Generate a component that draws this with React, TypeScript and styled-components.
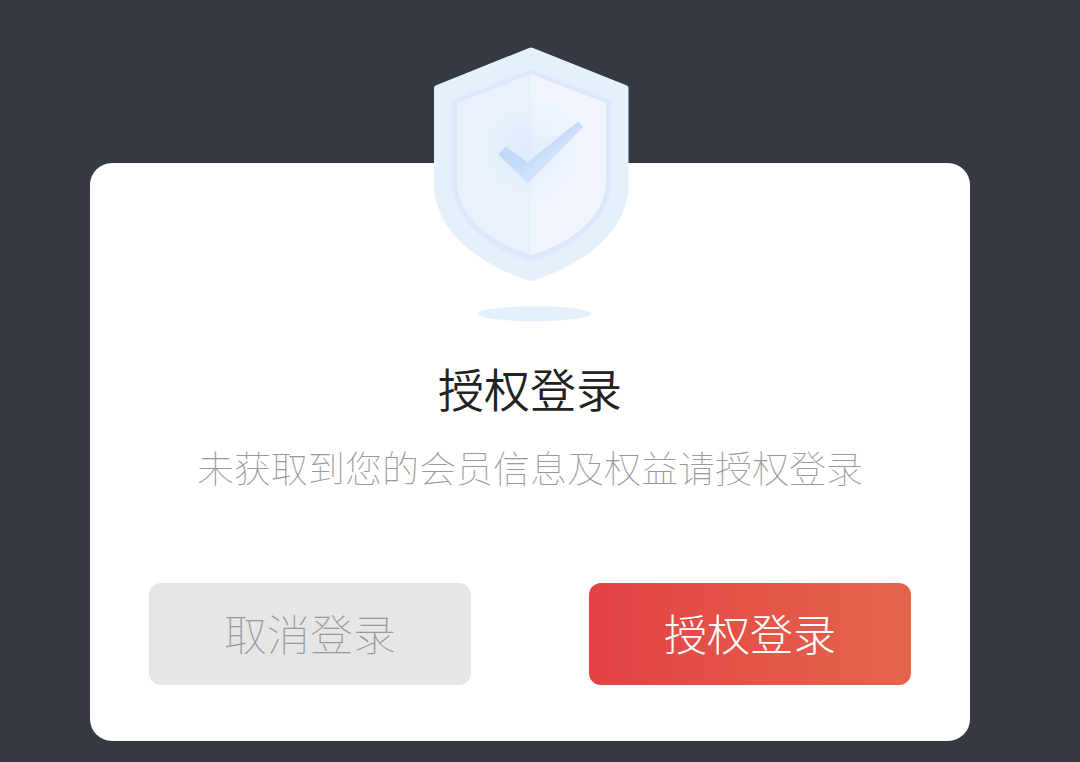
import React from "react";
import styled, { createGlobalStyle } from "styled-components";

const GlobalStyle = createGlobalStyle`
  *, *::before, *::after { box-sizing: border-box; }
  body {
    margin: 0;
    background: #353941;
    font-family: "Noto Sans CJK SC", sans-serif;
  }
`;

const Backdrop = styled.main`
  min-height: 100vh;
  padding: 163px 110px 21px 90px;
  background: #353941;
`;

const Dialog = styled.section`
  display: flex;
  flex-direction: column;
  align-items: center;
  max-width: 960px;
  margin: 0 auto;
  padding: 0 59px 56px;
  border-radius: 22px;
  background: #ffffff;
`;

const Shield = styled.svg`
  display: block;
  width: 200px;
  height: 276px;
  margin-top: -116px;
`;

const Title = styled.h1`
  margin: 32px 0 0;
  color: #222222;
  font-size: 46px;
  font-weight: 350;
  line-height: 64px;
`;

const Message = styled.p`
  margin: 21px 0 0;
  color: #999999;
  font-size: 37px;
  font-weight: 100;
  line-height: 54px;
  text-align: center;
`;

const Actions = styled.div`
  display: flex;
  gap: 118px;
  width: 100%;
  margin-top: 89px;
`;

const ActionButton = styled.button<{ $primary?: boolean }>`
  flex: 1;
  height: 102px;
  padding: 0 0 4px;
  border: 0;
  border-radius: 12px;
  background: ${(p) =>
    p.$primary ? "linear-gradient(90deg, #e44244, #e4654c)" : "#e6e6e6"};
  color: ${(p) => (p.$primary ? "#ffffff" : "#999999")};
  font-family: inherit;
  font-size: 43px;
  font-weight: ${(p) => (p.$primary ? 300 : 100)};
  line-height: 60px;
  white-space: nowrap;
  cursor: pointer;
`;

function ShieldCheck() {
  return (
    <Shield viewBox="430 47 200 276" aria-hidden="true">
      <defs>
        <radialGradient id="glow" gradientUnits="userSpaceOnUse" cx="528" cy="150" r="58">
          <stop offset="0" stopColor="#d9e9fb" />
          <stop offset="1" stopColor="#e2effd" stopOpacity="0" />
        </radialGradient>
        <linearGradient id="tick" gradientUnits="userSpaceOnUse" x1="534" y1="150" x2="543" y2="162">
          <stop offset="0" stopColor="#c3d9f8" />
          <stop offset="1" stopColor="#d0e1fb" />
        </linearGradient>
        <filter id="soften" x="-5%" y="-5%" width="110%" height="110%">
          <feGaussianBlur stdDeviation="1" />
        </filter>
        <clipPath id="face">
          <path d="M531 74 L606 103 V180 C606 216 572 243 531 255 C490 243 457 216 457 180 V103 Z" />
        </clipPath>
      </defs>
      <path
        fill="#e5f0fd"
        d="M529 48 Q531 47 533 48 L627 85.500 Q628.500 86.300 628.500 88 V184 C628.500 228 590 262 534 280.500 Q531 281.500 528 280.500 C474 262 434 228 434 184 V88 Q434 86.300 435.500 85.500 Z"
      />
      <path
        fill="#dce8fa"
        filter="url(#soften)"
        d="M531 69.500 L611 100.500 V181 C611 219 574 249 531 261.500 C488 249 452 219 452 181 V100.500 Z"
      />
      <g clipPath="url(#face)">
        <path fill="#e9f1fd" d="M450 70 H531 V260 H450 Z" />
        <path fill="#f0f5fe" d="M531 70 H610 V260 H531 Z" />
        <circle cx="528" cy="150" r="58" fill="url(#glow)" opacity="0.7" />
      </g>
      <path
        fill="url(#tick)"
        d="M499 153.500 L505 147 Q506 146.500 507 147.200 L527.700 162.300 L577 122.300 Q578.200 121.500 579 122.300 L582.700 126.300 Q583 127 582.300 127.700 L529 182.300 Q527.700 183.500 526.500 182.300 L499 155 Q498.500 154.300 499 153.500 Z"
      />
      <ellipse cx="534.500" cy="313.700" rx="57" ry="7.500" fill="#e5f0fd" />
    </Shield>
  );
}

export default function App() {
  return (
    <>
      <GlobalStyle />
      <Backdrop>
        <Dialog role="dialog" aria-labelledby="dialog-title" aria-describedby="dialog-message">
          <ShieldCheck />
          <Title id="dialog-title">授权登录</Title>
          <Message id="dialog-message">未获取到您的会员信息及权益请授权登录</Message>
          <Actions>
            <ActionButton type="button">取消登录</ActionButton>
            <ActionButton type="button" $primary>授权登录</ActionButton>
          </Actions>
        </Dialog>
      </Backdrop>
    </>
  );
}
